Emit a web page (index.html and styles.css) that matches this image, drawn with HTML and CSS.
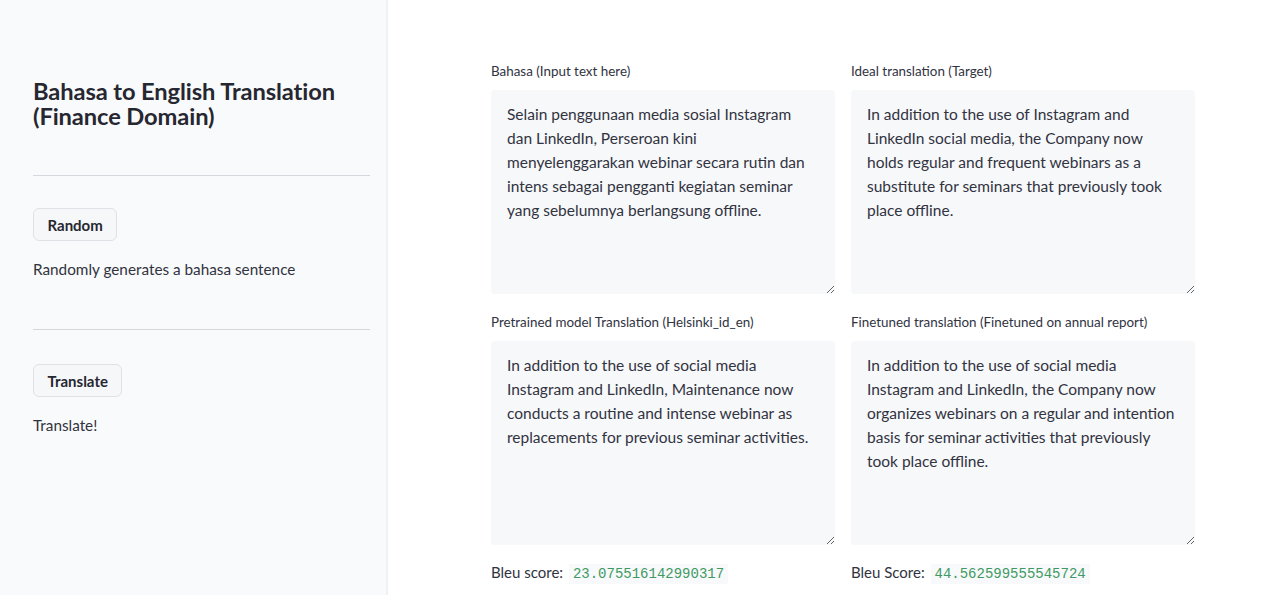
FILE: index.html
```html
<!DOCTYPE html>
<html>
<head>
<meta charset="utf-8">
<link rel="stylesheet" href="styles.css">
</head>
<body>
<div class="app">
  <aside class="sidebar">
    <h1 class="title">Bahasa to English Translation (Finance Domain)</h1>
    <hr class="rule">
    <button class="btn">Random</button>
    <p class="note">Randomly generates a bahasa sentence</p>
    <hr class="rule">
    <button class="btn">Translate</button>
    <p class="note">Translate!</p>
  </aside>
  <main class="main">
    <div class="grid">
      <div class="field">
        <label class="label">Bahasa (Input text here)</label>
        <textarea class="box" wrap="off">Selain penggunaan media sosial Instagram
dan LinkedIn, Perseroan kini
menyelenggarakan webinar secara rutin dan
intens sebagai pengganti kegiatan seminar
yang sebelumnya berlangsung offline.</textarea>
      </div>
      <div class="field">
        <label class="label">Ideal translation (Target)</label>
        <textarea class="box" wrap="off">In addition to the use of Instagram and
LinkedIn social media, the Company now
holds regular and frequent webinars as a
substitute for seminars that previously took
place offline.</textarea>
      </div>
      <div class="field">
        <label class="label">Pretrained model Translation (Helsinki_id_en)</label>
        <textarea class="box" wrap="off">In addition to the use of social media
Instagram and LinkedIn, Maintenance now
conducts a routine and intense webinar as
replacements for previous seminar activities.</textarea>
        <p class="score">Bleu score: <code class="code">23.075516142990317</code></p>
      </div>
      <div class="field">
        <label class="label">Finetuned translation (Finetuned on annual report)</label>
        <textarea class="box" wrap="off">In addition to the use of social media
Instagram and LinkedIn, the Company now
organizes webinars on a regular and intention
basis for seminar activities that previously
took place offline.</textarea>
        <p class="score">Bleu Score: <code class="code">44.562599555545724</code></p>
      </div>
    </div>
  </main>
</div>
</body>
</html>
```
FILE: styles.css
```css
* { box-sizing: border-box; }
html, body { margin: 0; padding: 0; height: 100%; }
body {
  font-family: "Lato", "Noto Sans", sans-serif;
  color: #31333f;
  background: #ffffff;
  overflow: hidden;
}
.app { display: flex; height: 595px; }
.sidebar {
  width: 388px;
  flex: none;
  background: #f9fafb;
  border-right: 2px solid #f0f1f4;
  padding: 79px 16px 0 33px;
}
.title {
  margin: 0;
  font-size: 23.7px;
  line-height: 25px;
  font-weight: 700;
  color: #262730;
  letter-spacing: -0.1px;
}
.rule {
  border: none;
  border-top: 1px solid #d6d8de;
  margin: 46px 0 32px;
}
.note + .rule { margin-top: 50px; margin-bottom: 34px; }
.btn {
  display: block;
  font: inherit;
  font-size: 15px;
  font-weight: 700;
  color: #262730;
  background: #f6f7f9;
  border: 1px solid #dfe1e6;
  border-radius: 6px;
  height: 33px;
  padding: 0 13.5px;
}
.note {
  margin: 18px 0 0;
  font-size: 15.3px;
  line-height: 20px;
  color: #31333f;
}
.note:last-child { margin-top: 18px; }
.main { flex: 1; padding: 62px 0 0 103px; }
.grid {
  display: grid;
  grid-template-columns: 344px 344px;
  column-gap: 16px;
  row-gap: 19px;
}
.field { display: flex; flex-direction: column; }
.label {
  font-size: 13.4px;
  line-height: 18px;
  color: #31333f;
  margin-bottom: 10px;
}
.box {
  height: 204px;
  background: #f7f8fa;
  border: none;
  border-radius: 4px;
  padding: 12px 16px;
  font-family: inherit;
  font-size: 15.5px;
  line-height: 24px;
  color: #31333f;
  resize: vertical;
  overflow: hidden;
  outline: none;
}
.score {
  margin: 17px 0 0;
  font-size: 15px;
  line-height: 20px;
}
.code {
  font-family: "Liberation Mono", "DejaVu Sans Mono", monospace;
  font-size: 14px;
  color: #3e9a62;
  background: #f8f9fa;
  padding: 2px 4px;
  margin-left: 2px;
}
```
